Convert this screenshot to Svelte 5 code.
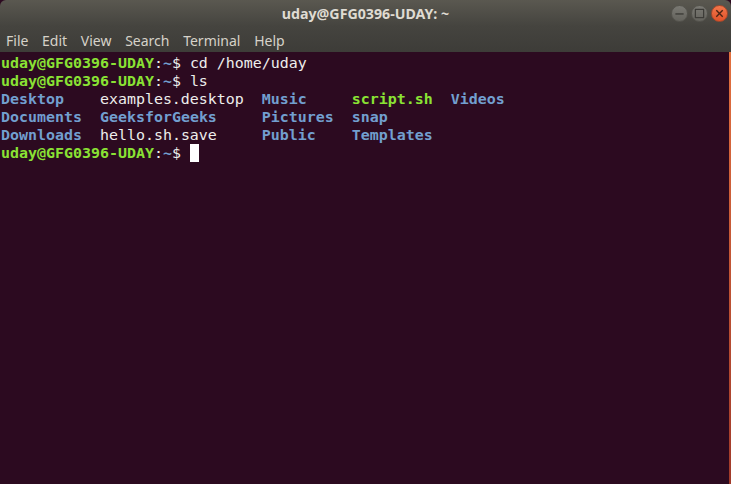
<script>
  const menus = ['File', 'Edit', 'View', 'Search', 'Terminal', 'Help'];
</script>

<div class="window">
  <div class="chrome">
    <header class="titlebar">
      <span class="title">uday@GFG0396-UDAY: ~</span>
      <div class="controls">
        <span class="btn">
          <svg width="11" height="11" viewBox="0 0 12 12"><path d="M1.5 6.5h9" stroke="#3c3b37" stroke-width="1.5" fill="none" /></svg>
        </span>
        <span class="btn">
          <svg width="11" height="11" viewBox="0 0 12 12"><rect x="1.5" y="1.5" width="9" height="9" stroke="#3c3b37" stroke-width="1.3" fill="none" /></svg>
        </span>
        <span class="btn close">
          <svg width="11" height="11" viewBox="0 0 12 12"><path d="M2.5 2.5l7 7M9.5 2.5l-7 7" stroke="#4a2414" stroke-width="1.5" fill="none" /></svg>
        </span>
      </div>
    </header>
    <nav class="menubar">
      {#each menus as m}
        <span>{m}</span>
      {/each}
    </nav>
  </div>
  <pre class="term"><b class="g">uday@GFG0396-UDAY</b>:<b class="b">~</b>$ cd /home/uday
<b class="g">uday@GFG0396-UDAY</b>:<b class="b">~</b>$ ls
<b class="b">Desktop</b>    examples.desktop  <b class="b">Music</b>     <b class="g">script.sh</b>  <b class="b">Videos</b>
<b class="b">Documents</b>  <b class="b">GeeksforGeeks</b>     <b class="b">Pictures</b>  <b class="b">snap</b>
<b class="b">Downloads</b>  hello.sh.save     <b class="b">Public</b>    <b class="b">Templates</b>
<b class="g">uday@GFG0396-UDAY</b>:<b class="b">~</b>$ <span class="cursor"> </span></pre>
  <span class="edge"></span>
</div>

<style>
  :global(body) {
    margin: 0;
    background: #2c0a20;
  }

  .window {
    width: 731px;
    height: 484px;
    display: flex;
    flex-direction: column;
    overflow: hidden;
    position: relative;
    background: #2c0a20;
  }

  .chrome {
    height: 52px;
    flex: none;
    display: flex;
    flex-direction: column;
    background: linear-gradient(#5a5850, #45443f 50%, #3d3c38);
    border-radius: 6px 6px 0 0;
  }

  .titlebar {
    height: 27px;
    flex: none;
    display: flex;
    align-items: center;
    justify-content: center;
    position: relative;
  }

  .title {
    font-family: "Noto Sans", "Open Sans", sans-serif;
    font-weight: 700;
    font-size: 14.2px;
    color: #dfdbd2;
  }

  .controls {
    position: absolute;
    right: 3px;
    top: 5px;
    display: flex;
    gap: 3px;
  }

  .btn {
    width: 17px;
    height: 17px;
    box-sizing: border-box;
    border-radius: 50%;
    display: flex;
    align-items: center;
    justify-content: center;
    background: linear-gradient(#7a7973, #64635d);
    border: 1px solid #55544e;
  }

  .close {
    background: linear-gradient(#f2774b, #e0522a);
    border-color: #a8482a;
  }

  .menubar {
    height: 25px;
    flex: none;
    display: flex;
    align-items: center;
    gap: 13.7px;
    padding: 2px 0 0 6px;
    box-sizing: border-box;
    color: #d6d2c9;
    font-family: "Noto Sans", "Open Sans", sans-serif;
    font-size: 14px;
  }

  .term {
    flex: 1;
    margin: 0;
    padding: 1.5px 0 0 1px;
    font-family: "DejaVu Sans Mono", monospace;
    font-size: 14.95px;
    line-height: 18px;
    color: #eeeeec;
  }

  .term b {
    font-weight: 700;
  }

  .g {
    color: #8ae234;
  }

  .b {
    color: #729fcf;
  }

  .cursor {
    display: inline-block;
    width: 9px;
    height: 18px;
    background: #fff;
    vertical-align: top;
  }

  /* strip of the desktop showing past the window */
  .edge {
    position: absolute;
    top: 52px;
    right: 0;
    bottom: 0;
    width: 2px;
    background: linear-gradient(#e2703f, #a03a2a);
  }
</style>
